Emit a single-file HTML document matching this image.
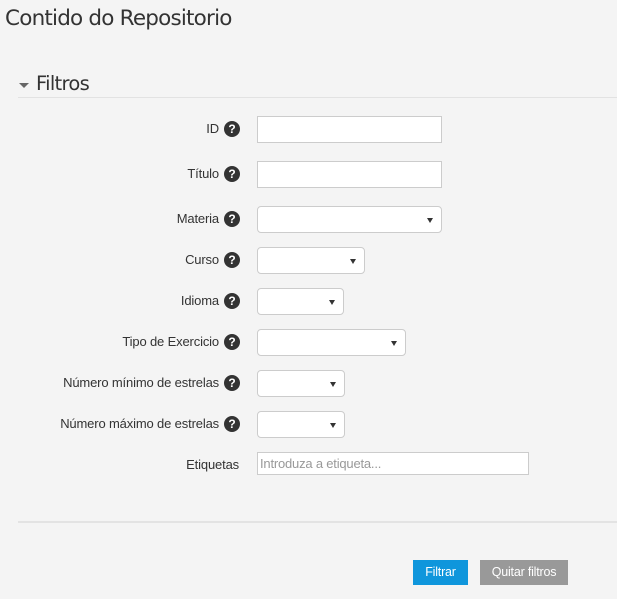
<!DOCTYPE html>
<html><head><meta charset="utf-8"><style>
*{box-sizing:border-box;margin:0;padding:0}
body{width:617px;height:599px;background:#f4f4f4;position:relative;overflow:hidden;font-family:"Liberation Sans",Arial,sans-serif;color:#333}
.a{position:absolute}
h1{position:absolute;left:5px;top:6px;font-weight:normal;font-size:21.5px;color:#333;font-family:"DejaVu Sans","Liberation Sans",sans-serif;letter-spacing:-0.8px}
.lbl{position:absolute;font-size:13px;text-align:right;width:300px;line-height:16px;letter-spacing:-0.15px}
.q{position:absolute;width:16px;height:16px;border-radius:50%;background:#333;color:#fff;font-size:12px;font-weight:bold;text-align:center;line-height:16px}
.in{position:absolute;background:#fff;border:1px solid #ccc;height:27px}
.sel{position:absolute;background:#fff;border:1px solid #ccc;border-radius:4px;height:27px}
.sel:after{content:"";position:absolute;right:8px;top:11px;border-left:3px solid transparent;border-right:3px solid transparent;border-top:5px solid #333}
.btn{position:absolute;color:#fff;font-size:12.5px;text-align:center;line-height:25px;height:25px;letter-spacing:-0.2px}
</style></head><body>
<h1>Contido do Repositorio</h1>
<div class="a" style="left:19px;top:83px;border-left:5px solid transparent;border-right:5px solid transparent;border-top:5px solid #666"></div>
<div class="a" style="left:36px;top:72px;font-size:19.5px;font-family:'DejaVu Sans','Liberation Sans',sans-serif;color:#333;letter-spacing:-0.7px">Filtros</div>
<div class="a" style="left:18px;top:97px;width:599px;height:1px;background:#e2e2e2"></div>

<div class="lbl" style="left:-81px;top:121px">ID</div><div class="q" style="left:224px;top:121px">?</div><div class="in" style="left:257px;top:116px;width:185px"></div>
<div class="lbl" style="left:-81px;top:166px">Título</div><div class="q" style="left:224px;top:166px">?</div><div class="in" style="left:257px;top:161px;width:185px"></div>
<div class="lbl" style="left:-81px;top:211px">Materia</div><div class="q" style="left:224px;top:211px">?</div><div class="sel" style="left:257px;top:206px;width:185px"></div>
<div class="lbl" style="left:-81px;top:252px">Curso</div><div class="q" style="left:224px;top:252px">?</div><div class="sel" style="left:257px;top:247px;width:108px"></div>
<div class="lbl" style="left:-81px;top:293px">Idioma</div><div class="q" style="left:224px;top:293px">?</div><div class="sel" style="left:257px;top:288px;width:87px"></div>
<div class="lbl" style="left:-81px;top:334px">Tipo de Exercicio</div><div class="q" style="left:224px;top:334px">?</div><div class="sel" style="left:257px;top:329px;width:149px"></div>
<div class="lbl" style="left:-81px;top:375px">Número mínimo de estrelas</div><div class="q" style="left:224px;top:375px">?</div><div class="sel" style="left:257px;top:370px;width:88px"></div>
<div class="lbl" style="left:-81px;top:416px">Número máximo de estrelas</div><div class="q" style="left:224px;top:416px">?</div><div class="sel" style="left:257px;top:411px;width:88px"></div>
<div class="lbl" style="left:-61px;top:457px">Etiquetas</div>
<div class="in" style="left:257px;top:452px;width:272px;height:23px;font-size:13px;color:#999;padding-left:2px;line-height:21px;letter-spacing:-0.2px">Introduza a etiqueta...</div>

<div class="a" style="left:18px;top:521px;width:599px;height:2px;background:#e3e3e3"></div>
<div class="btn" style="left:413px;top:560px;width:55px;background:#0f96dc">Filtrar</div>
<div class="btn" style="left:480px;top:560px;width:88px;background:#999">Quitar filtros</div>
</body></html>
